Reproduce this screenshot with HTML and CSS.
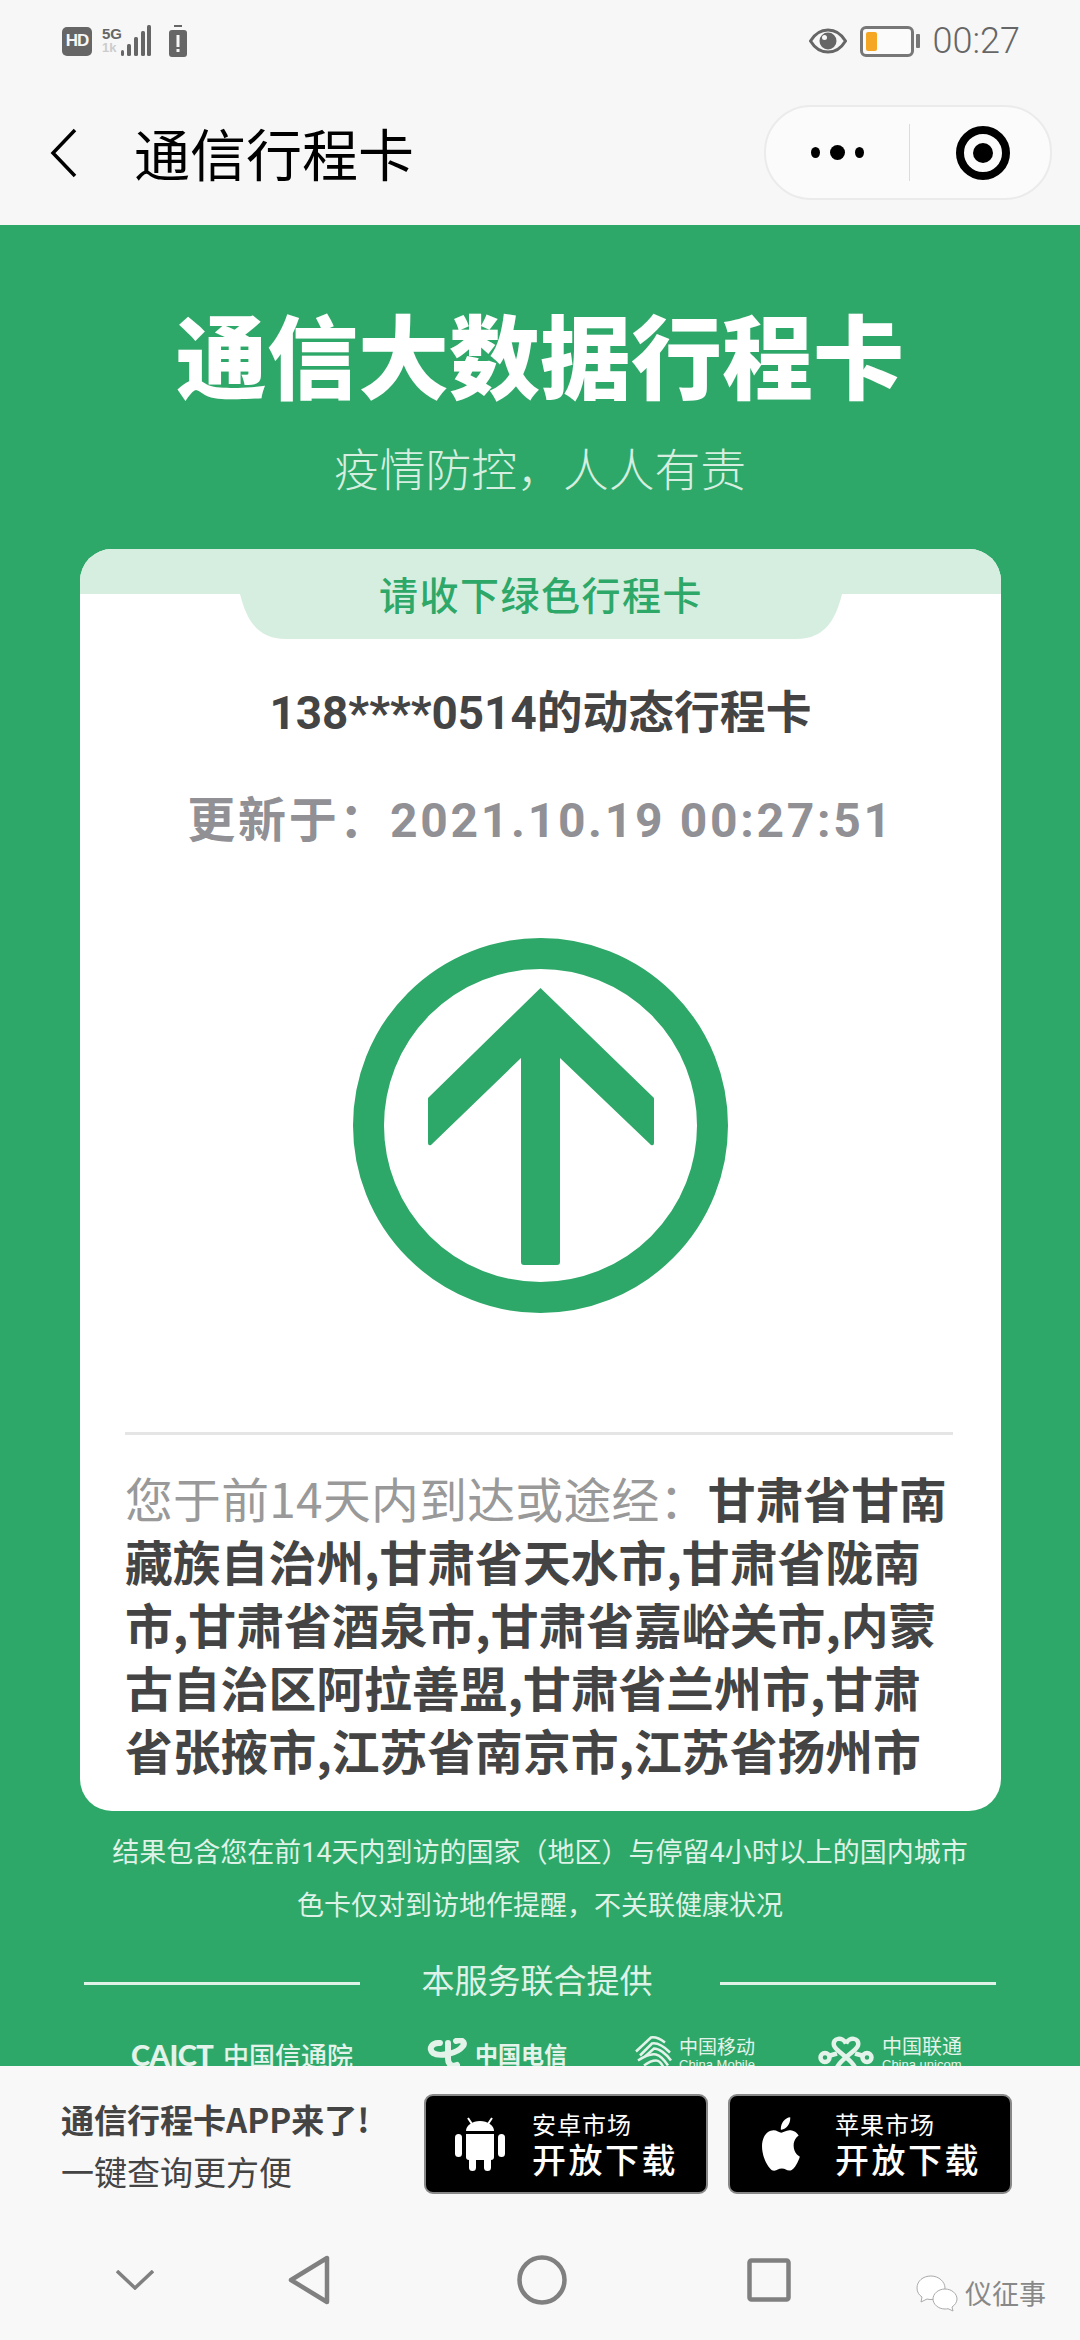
FILE: index.html
```html
<!DOCTYPE html>
<html lang="zh-CN">
<head>
    <meta charset="UTF-8">
    <meta name="viewport" content="width=device-width, initial-scale=1.0">
    <title>通信行程卡</title>
    <link rel="stylesheet" href="styles.css">
</head>
<body>
    <div class="status-bar">
        <div class="status-left">
            <span class="hd">HD</span>
            <span class="net">
                <span class="net-5g">5G</span>
                <span class="net-speed">1k</span>
            </span>
            <svg class="signal" viewBox="0 0 30 32" fill="#666">
                <rect x="0" y="25" width="3" height="6" rx="1.5"></rect>
                <rect x="6" y="19" width="4" height="12" rx="1.5"></rect>
                <rect x="13" y="12" width="4" height="19" rx="1.5"></rect>
                <rect x="20" y="6" width="4" height="25" rx="1.5"></rect>
                <rect x="26" y="0" width="4" height="31" rx="1.5"></rect>
            </svg>
            <svg class="sim-alert" viewBox="0 0 18 32">
                <rect x="5" y="0" width="8" height="2" fill="#666"></rect>
                <rect x="0" y="5" width="18" height="27" rx="3" fill="#666"></rect>
                <rect x="7.5" y="10" width="3" height="12" fill="#f7f7f7"></rect>
                <rect x="7.5" y="24" width="3" height="3" fill="#f7f7f7"></rect>
            </svg>
        </div>
        <div class="status-right">
            <svg class="eye" viewBox="0 0 38 26">
                <path d="M1.5 13C6 5.500 12 2 19 2s13 3.500 17.500 11C32 20.500 26 24 19 24S6 20.500 1.500 13z" fill="none" stroke="#666" stroke-width="3"></path>
                <circle cx="19" cy="13" r="8.500" fill="#666"></circle>
                <circle cx="15.500" cy="9.500" r="2.500" fill="#f7f7f7"></circle>
            </svg>
            <span class="battery"><span class="battery-level"></span></span>
            <span class="battery-cap"></span>
            <span class="clock">00:27</span>
        </div>
    </div>

    <header class="nav-bar">
        <svg class="back" viewBox="0 0 28 50" fill="none" stroke="#000" stroke-width="3.500">
            <polyline points="25,2 3,25 25,48"></polyline>
        </svg>
        <h1 class="nav-title">通信行程卡</h1>
        <div class="capsule">
            <div class="capsule-dots">
                <span class="dot"></span>
                <span class="dot dot-big"></span>
                <span class="dot"></span>
            </div>
            <span class="capsule-line"></span>
            <div class="capsule-target"></div>
        </div>
    </header>

    <main class="content">
        <h2 class="headline">通信大数据行程卡</h2>
        <p class="slogan">疫情防控&#xFF0C;人人有责</p>

        <section class="card">
            <div class="card-band"></div>
            <div class="card-tab">
                <svg class="card-tab-bg" viewBox="0 0 602 45">
                    <path d="M0 0H602C596 24 586 45 556 45H46C16 45 6 24 0 0z" fill="#d6eee0"></path>
                </svg>
                <span class="card-tab-text">请收下绿色行程卡</span>
            </div>
            <div class="phone">138****0514的动态行程卡</div>
            <div class="updated">更新于&#xFF1A;2021.10.19 00:27:51</div>

            <svg class="arrow-mark" viewBox="0 0 375 375">
                <circle cx="187.500" cy="187.500" r="172" fill="none" stroke="#2ea868" stroke-width="31"></circle>
                <path d="M187.500 50L300 159a2 2 0 0 1 1 2V205q0 3-3 2L207 120V324q0 3-3 3H171q-3 0-3-3V120L78 207q-3 1-3-2V161a2 2 0 0 1 1-2z" fill="#2ea868"></path>
            </svg>

            <div class="card-line"></div>
            <p class="places"><span class="places-label">您于前14天内到达或途经&#xFF1A;</span><strong class="places-list">甘肃省甘南藏族自治州,甘肃省天水市,甘肃省陇南市,甘肃省酒泉市,甘肃省嘉峪关市,内蒙古自治区阿拉善盟,甘肃省兰州市,甘肃省张掖市,江苏省南京市,江苏省扬州市</strong></p>
        </section>

        <p class="note">结果包含您在前14天内到访的国家&#xFF08;地区&#xFF09;与停留4小时以上的国内城市</p>
        <p class="note">色卡仅对到访地作提醒&#xFF0C;不关联健康状况</p>

        <div class="provided">
            <span class="provided-line"></span>
            <span class="provided-text">本服务联合提供</span>
            <span class="provided-line"></span>
        </div>

        <div class="logos">
            <div class="logo logo-caict">
                <span class="caict-en">CAICT</span>
                <span class="caict-cn">中国信通院</span>
            </div>
            <div class="logo logo-telecom">
                <svg class="telecom-icon" viewBox="0 0 40 30" fill="none" stroke="#e4f3ea" stroke-width="6" stroke-linecap="round">
                    <path d="M13 5C5 4 1 11 6 15c6 4 24 1 30-7 3-4-2-7-7-5"></path>
                    <path d="M21 5V21c0 6 5 8 9 6"></path>
                </svg>
                <span class="telecom-text">中国电信</span>
            </div>
            <div class="logo logo-mobile">
                <svg class="mobile-icon" viewBox="0 0 38 30" fill="none" stroke="#e4f3ea" stroke-width="2.500">
                    <path d="M1 15L16 1c5-1 10 2 14 5"></path>
                    <path d="M5 19L17 7c6-1 12 3 18 9"></path>
                    <path d="M10 20l9-8c5 0 12 5 17 12"></path>
                    <path d="M3 24c6-4 13-7 18-6 4 1 8 5 12 11"></path>
                    <path d="M9 29c4-3 8-5 12-5 3 0 5 2 7 6"></path>
                </svg>
                <div class="mobile-text">
                    <span class="brand-cn">中国移动</span>
                    <span class="brand-en">China Mobile</span>
                </div>
            </div>
            <div class="logo logo-unicom">
                <svg class="unicom-icon" viewBox="0 0 56 30" fill="none" stroke="#e4f3ea" stroke-width="4.500">
                    <path d="M28 7C25 0 14 1 16 9c1 5 18 14 21 22"></path>
                    <path d="M28 7C31 0 42 1 40 9c-1 5-18 14-21 22"></path>
                    <circle cx="7" cy="21" r="4.500"></circle>
                    <circle cx="49" cy="21" r="4.500"></circle>
                    <path d="M12 19l7-2M44 19l-7-2"></path>
                </svg>
                <div class="unicom-text">
                    <span class="brand-cn">中国联通</span>
                    <span class="brand-en">China unicom</span>
                </div>
            </div>
        </div>
    </main>

    <div class="bottom-area">
        <div class="app-row">
            <div class="app-copy">
                <div class="app-title">通信行程卡APP来了!</div>
                <div class="app-sub">一键查询更方便</div>
            </div>
            <a class="store-btn" href="#">
                <svg class="android" viewBox="0 0 50 54" fill="#fff">
                    <path d="M11 14a14 10 0 0 1 28 0z"></path>
                    <path d="M13 1l4 6M37 1l-4 6" stroke="#fff" stroke-width="2"></path>
                    <path d="M11 17H39V40a3 3 0 0 1-3 3H14a3 3 0 0 1-3-3z"></path>
                    <rect x="0" y="17" width="7" height="23" rx="3.500"></rect>
                    <rect x="43" y="17" width="7" height="23" rx="3.500"></rect>
                    <rect x="14" y="40" width="7" height="14" rx="3.500"></rect>
                    <rect x="29" y="40" width="7" height="14" rx="3.500"></rect>
                </svg>
                <span class="store-text">
                    <span class="store-name">安卓市场</span>
                    <span class="store-action">开放下载</span>
                </span>
            </a>
            <a class="store-btn store-btn-apple" href="#">
                <svg class="apple" viewBox="3 1.500 18 21" preserveAspectRatio="none" fill="#fff">
                    <path d="M18.710 19.500c-.83 1.240-1.710 2.450-3.050 2.470-1.340.03-1.770-.79-3.290-.79-1.530 0-2 .77-3.270.82-1.310.05-2.300-1.320-3.140-2.530C4.250 17 2.940 12.450 4.700 9.390c.87-1.520 2.430-2.480 4.120-2.510 1.280-.02 2.500.87 3.290.87.78 0 2.260-1.070 3.810-.91.65.03 2.470.26 3.640 1.980-.09.06-2.170 1.280-2.150 3.810.03 3.020 2.650 4.030 2.680 4.040-.03.07-.42 1.440-1.380 2.830M13 3.500c.73-.83 1.940-1.460 2.940-1.500.13 1.170-.34 2.350-1.040 3.190-.69.85-1.830 1.510-2.950 1.420-.15-1.150.41-2.350 1.050-3.110z"></path>
                </svg>
                <span class="store-text">
                    <span class="store-name">苹果市场</span>
                    <span class="store-action">开放下载</span>
                </span>
            </a>
        </div>

        <nav class="sys-nav">
            <svg class="sys-chevron" viewBox="0 0 38 20" fill="none" stroke="#808080" stroke-width="3.500">
                <polyline points="1,1 19,18 37,1"></polyline>
            </svg>
            <svg class="sys-back" viewBox="0 0 42 50" fill="none" stroke="#808080" stroke-width="4.500" stroke-linejoin="round">
                <path d="M39 3V47L3 25z"></path>
            </svg>
            <svg class="sys-home" viewBox="0 0 50 50" fill="none" stroke="#808080" stroke-width="4.500">
                <circle cx="25" cy="25" r="22.500"></circle>
            </svg>
            <svg class="sys-recent" viewBox="0 0 44 44" fill="none" stroke="#808080" stroke-width="4.500">
                <rect x="2.500" y="2.500" width="39" height="39" rx="2"></rect>
            </svg>
            <div class="watermark">
                <svg class="wechat" viewBox="0 0 44 38" fill="#fff" stroke="#aaa" stroke-width="1">
                    <path d="M16 2C8 2 2 7 2 14c0 4 2 7 5 9l-1 5 6-3c1 .3 3 .5 4 .5C24 25.500 30 20 30 14S24 2 16 2z"></path>
                    <path d="M30 15c-7 0-12 5-12 10s5 10 12 10c1 0 2 0 3-.3l5 2.300-1-4c3-2 5-5 5-8 0-5-5-10-12-10z"></path>
                </svg>
                <span class="watermark-text">仪征事</span>
            </div>
        </nav>
    </div>
</body>
</html>
```

FILE: styles.css
```css
*{margin:0;padding:0;box-sizing:border-box}
html,body{width:1080px;height:2340px;overflow:hidden}
body{font-family:"Liberation Sans","Noto Sans CJK SC",sans-serif;background:#f7f7f7;color:#333;display:flex;flex-direction:column}

.status-bar{height:75px;flex:none;display:flex;justify-content:space-between;align-items:center;padding:7px 60px 0 62px;color:#666}
.status-left,.status-right{display:flex;align-items:center}
.hd{width:30px;height:29px;background:#666;color:#f7f7f7;border-radius:5px;font-size:17px;font-weight:700;display:flex;align-items:center;justify-content:center;letter-spacing:-1px}
.net{width:20px;margin-left:10px;display:flex;flex-direction:column;font-weight:700;line-height:14px}
.net-5g{font-size:15px;color:#666}
.net-speed{font-size:13px;color:#ccc}
.signal{width:30px;height:32px;margin-left:-1px}
.sim-alert{width:18px;height:32px;margin-left:18px}
.eye{width:38px;height:26px}
.battery{width:54px;height:31px;margin-left:13px;border:3px solid #777;border-radius:6px;padding:3px;background:#fbfbfb}
.battery-level{display:block;width:11px;height:100%;background:#f5a623;border-radius:2px}
.battery-cap{width:4px;height:14px;margin-left:2px;background:#777;border-radius:1px}
.clock{font-family:Roboto,sans-serif;font-weight:300;font-size:36px;margin-left:13px;line-height:40px;color:#666}

.nav-bar{height:150px;flex:none;position:relative;display:flex;align-items:center;padding:0 28px 0 50px}
.back{width:28px;height:50px;flex:none;margin-top:5px}
.nav-title{font-family:"Noto Sans CJK SC",sans-serif;font-size:56px;font-weight:400;color:#000;margin-left:56px;line-height:70px;margin-top:4px}
.capsule{margin-left:auto;margin-top:5px;width:288px;height:95px;border:2px solid #ebebeb;border-radius:47px;background:#fbfbfb;display:flex;align-items:center}
.capsule-dots{width:143px;display:flex;justify-content:center;align-items:center;gap:10px}
.dot{width:9px;height:11px;background:#000;border-radius:50%}
.dot-big{width:15px;height:15px}
.capsule-line{width:1px;height:57px;background:#dcdcdc}
.capsule-target{width:54px;height:54px;margin-left:46px;border:8px solid #000;border-radius:50%;position:relative}
.capsule-target::after{content:"";position:absolute;left:9px;top:9px;width:20px;height:20px;background:#000;border-radius:50%}

.content{flex:1;min-height:0;overflow:hidden;background:#2ea868;color:#fff}
.headline{font-family:"Noto Sans CJK SC",sans-serif;font-weight:900;font-size:91px;line-height:100px;text-align:center;margin-top:77px}
.slogan{font-family:"Noto Sans CJK SC",sans-serif;font-weight:300;font-size:45.800px;line-height:60px;text-align:center;color:#d6eee0;margin-top:35px}

.card{position:relative;margin:52px 79px 0 80px;height:1262px;background:#fff;border-radius:32px;overflow:hidden}
.card-band{height:45px;background:#d6eee0}
.card-tab{position:absolute;left:160px;top:45px;width:602px;height:45px}
.card-tab-bg{display:block;width:602px;height:45px}
.card-tab-text{position:absolute;left:0;right:0;top:-24px;text-align:center;font-family:"Noto Sans CJK SC",sans-serif;font-size:39px;font-weight:500;letter-spacing:1.500px;line-height:46px;color:#2ea868}
.phone{margin-top:90px;text-align:center;font-family:Roboto,"Noto Sans CJK SC",sans-serif;font-size:45.800px;font-weight:700;line-height:60px;color:#444}
.updated{margin-top:42px;text-align:center;font-family:Roboto,"Noto Sans CJK SC",sans-serif;font-size:48px;font-weight:700;letter-spacing:2.700px;line-height:70px;color:#909095}
.arrow-mark{display:block;width:375px;height:375px;margin:82px auto 0 273px}
.card-line{height:3px;margin:119px 48px 0 45px;background:#e5e5e5}
.places{margin:31px 40px 0 45px;font-family:"Noto Sans CJK SC",sans-serif;font-size:47.800px;line-height:63px;word-break:break-all}
.places-label{font-weight:400;color:#999;letter-spacing:.3px}
.places-list{font-weight:700;color:#444}

.note{font-family:Roboto,"Noto Sans CJK SC",sans-serif;font-weight:400;font-size:27px;line-height:53px;text-align:center;color:#dff2e7}
.card + .note{margin-top:16px}
.provided{margin-top:21px;display:flex;align-items:center;justify-content:center;padding:0 84px}
.provided-line{flex:1;height:3px;background:#dff2e7;margin-top:8px}
.provided-text{font-family:"Noto Sans CJK SC",sans-serif;font-size:33px;line-height:50px;color:#dff2e7;width:360px;text-align:center;padding-right:6px}

.logos{display:flex;margin-top:34px;padding-left:131px;color:#e4f3ea;align-items:flex-start}
.logo{display:flex;flex:none}
.logo-caict{margin-top:2px;align-items:center;width:296px}
.caict-en{font-family:Lato,sans-serif;font-weight:900;font-size:29px;line-height:30px;letter-spacing:-.5px;width:92px}
.caict-cn{font-family:"Noto Sans CJK SC",sans-serif;font-size:26px;font-weight:500;line-height:30px}
.logo-telecom{width:208px}
.telecom-icon{width:40px;height:30px;flex:none}
.telecom-text{margin-left:8px;font-family:"Noto Sans CJK SC",sans-serif;font-size:23px;font-weight:700;line-height:30px}
.logo-mobile{width:183px;margin-top:-3px}
.mobile-icon{width:38px;height:33px;flex:none}
.mobile-text,.unicom-text{display:flex;flex-direction:column;margin-left:6px}
.brand-cn{font-family:"Noto Sans CJK SC",sans-serif;font-size:19px;line-height:22px;white-space:nowrap}
.brand-en{font-size:13px;line-height:16px;white-space:nowrap}
.logo-unicom{margin-top:-3px}
.unicom-icon{width:56px;height:33px;flex:none}
.unicom-text{margin-left:8px}
.unicom-text .brand-cn{font-size:20px}

.bottom-area{height:274px;flex:none;background:#f8f8f8}
.app-row{height:150px;display:flex;align-items:flex-start;padding:28px 70px 0 61px}
.app-copy{width:363px;flex:none;font-family:"Noto Sans CJK SC",sans-serif}
.app-title{font-size:33px;font-weight:700;line-height:50px;color:#444;white-space:nowrap}
.app-sub{font-size:33px;font-weight:400;line-height:50px;margin-top:2px;color:#444;white-space:nowrap}
.store-btn{width:284px;height:100px;flex:none;background:#000;border:2px solid #888;border-radius:9px;display:flex;align-items:center;padding-left:29px;color:#fff;text-decoration:none}
.store-btn-apple{margin-left:20px;padding-left:30px}
.android{width:50px;height:54px;flex:none}
.apple{width:42px;height:56px;flex:none}
.store-btn-apple .store-text{margin-left:33px}
.store-text{margin-left:27px;margin-top:-3px;display:flex;flex-direction:column;font-family:"Noto Sans CJK SC",sans-serif}
.store-name{font-size:24px;letter-spacing:1px;line-height:32px}
.store-action{font-size:34px;font-weight:500;letter-spacing:2.500px;line-height:38px}

.sys-nav{height:124px;position:relative;display:flex;align-items:center;padding:4px 0 0 116px}
.sys-chevron{width:38px;height:20px;flex:none}
.sys-back{width:42px;height:50px;flex:none;margin-left:134px}
.sys-home{width:50px;height:50px;flex:none;margin-left:187px}
.sys-recent{width:44px;height:44px;flex:none;margin-left:180px}
.watermark{position:absolute;left:915px;top:58px;display:flex;align-items:center}
.wechat{width:44px;height:38px;flex:none}
.watermark-text{font-family:"Noto Sans CJK SC",sans-serif;font-size:27px;line-height:36px;margin-left:6px;color:#888}
```
